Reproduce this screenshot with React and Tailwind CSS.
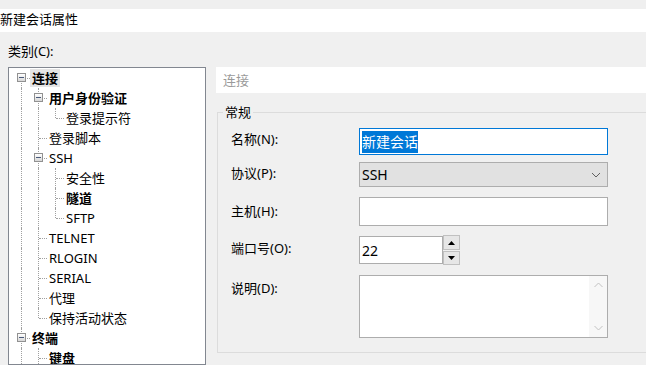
import React from 'react';

const FONT = { fontFamily: '"Noto Sans", "Noto Sans CJK SC", sans-serif' };

// tree rows: level, label, bold, expander, selected, guides (ancestor columns that still continue), last (no sibling below)
const rows = [
    {lv: 0, t: '连接', b: true, exp: true, sel: true, g: [], last: false},
    {lv: 1, t: '用户身份验证', b: true, exp: true, g: [true], last: false},
    {lv: 2, t: '登录提示符', g: [true, true], last: true},
    {lv: 1, t: '登录脚本', g: [true], last: false},
    {lv: 1, t: 'SSH', exp: true, g: [true], last: false},
    {lv: 2, t: '安全性', g: [true, true], last: false},
    {lv: 2, t: '隧道', b: true, g: [true, true], last: false},
    {lv: 2, t: 'SFTP', g: [true, true], last: true},
    {lv: 1, t: 'TELNET', g: [true], last: false},
    {lv: 1, t: 'RLOGIN', g: [true], last: false},
    {lv: 1, t: 'SERIAL', g: [true], last: false},
    {lv: 1, t: '代理', g: [true], last: false},
    {lv: 1, t: '保持活动状态', g: [true], last: true},
    {lv: 0, t: '终端', b: true, exp: true, g: [], last: false},
    {lv: 1, t: '键盘', b: true, g: [true], last: false},
];

function Expander ()
{
    return (
        <div className="absolute left-[4px] top-[5px] w-[9px] h-[9px] border border-[#919191] bg-gradient-to-b from-white to-[#d8d8d8] flex items-center justify-center z-10">
            <div className="w-[5px] h-px bg-[#4a5a7a]" />
        </div>
    );
}

function TreeRow ({row, first})
{
    return (
        <div className="flex h-[20px] items-stretch">
            {row.g.map((on, i) => (
                <div key={i} className="w-[17px] relative shrink-0">
                    {on && <div className="absolute left-[8px] top-0 bottom-0 border-l border-dotted border-[#a0a0a0]" />}
                </div>
            ))}
            <div className="w-[17px] relative shrink-0">
                <div className={`absolute left-[8px] border-l border-dotted border-[#a0a0a0] ${first ? 'top-[10px]' : 'top-0'} ${row.last ? 'h-[10px]' : 'bottom-0'}`} />
                <div className="absolute left-[9px] right-0 top-[10px] border-t border-dotted border-[#a0a0a0]" />
                {row.exp && <Expander />}
            </div>
            <div className={`px-[2px] leading-[18px] my-[1px] text-[13px] text-black whitespace-nowrap ${row.b ? 'font-bold' : ''} ${row.sel ? 'bg-[#e5e5e5]' : ''}`}>
                {row.t}
            </div>
        </div>
    );
}

function Field ({label, pad, children, className = ''})
{
    return (
        <div className={`flex items-start ${className}`}>
            <div className={`w-[141px] shrink-0 pl-[13px] text-[13px] leading-[18px] text-black ${pad}`}>{label}</div>
            {children}
        </div>
    );
}

export default function App ()
{
    return (
        <div style={FONT} className="w-[646px] h-[365px] overflow-hidden bg-[#f0f0f0] flex flex-col">
            <div className="h-[9px] shrink-0 bg-[#efefef]" />
            <div className="h-[23px] shrink-0 bg-white text-[13px] leading-[21px] text-black whitespace-nowrap">新建会话属性</div>

            <div className="flex flex-1 min-h-0">
                {/* 类别 */}
                <div className="w-[206px] shrink-0 pl-[8px] flex flex-col">
                    <div className="mt-[10px] h-[18px] leading-[18px] text-[13px] text-black">类别(C):</div>
                    <div className="mt-[7px] flex-1 bg-white border border-[#828790] pl-[4px] overflow-hidden">
                        {rows.map((r, i) => <TreeRow key={i} row={r} first={i === 0} />)}
                    </div>
                </div>

                {/* 属性页 */}
                <div className="flex-1 ml-[10px] pt-[35px] flex flex-col min-w-0">
                    <div className="h-[26px] bg-white pl-[7px] text-[13px] leading-[26px] text-[#9a9a9a]">连接</div>

                    <div className="relative mt-[19px] ml-px mr-[-20px] h-[241px] border border-[#dcdcdc] pt-[15px]">
                        <div className="absolute -top-[10px] left-[5px] px-[2px] bg-[#f0f0f0] text-[13px] leading-[18px] text-black">常规</div>

                        <Field label="名称(N):" pad="pt-[2px]">
                            <div className="w-[249px] h-[27px] border border-[#0078d7] bg-white pl-[2px] flex items-center">
                                <span className="bg-[#0078d7] text-white text-[14px] leading-[22px]">新建会话</span>
                            </div>
                        </Field>

                        <Field label="协议(P):" pad="pt-[2px]" className="mt-[7px]">
                            <div className="w-[249px] h-[25px] border border-[#adadad] bg-[#e1e1e1] pl-[2px] pr-[6px] flex items-center justify-between">
                                <span className="text-[14px] text-black">SSH</span>
                                <svg width="10" height="6" viewBox="0 0 10 6"><path d="M1 1l4 4 4-4" fill="none" stroke="#606060" strokeWidth="1" /></svg>
                            </div>
                        </Field>

                        <Field label="主机(H):" pad="pt-[5px]" className="mt-[10px]">
                            <div className="w-[249px] h-[29px] border border-[#adadad] bg-white" />
                        </Field>

                        <Field label="端口号(O):" pad="pt-[3px]" className="mt-[10px]">
                            <div className="flex">
                                <div className="w-[84px] h-[28px] border border-[#adadad] bg-white pl-[2px] flex items-center text-[14px] text-black">22</div>
                                <div className="flex flex-col gap-px -mt-px">
                                    <div className="w-[17px] h-[15px] border border-[#c0c0c0] bg-[#e6e6e6] flex items-center justify-center">
                                        <svg width="7" height="4" viewBox="0 0 7 4"><path d="M0 4h7L3.5 0z" fill="#000" /></svg>
                                    </div>
                                    <div className="w-[17px] h-[14px] border border-[#c0c0c0] bg-[#e6e6e6] flex items-center justify-center">
                                        <svg width="7" height="4" viewBox="0 0 7 4"><path d="M0 0h7L3.5 4z" fill="#000" /></svg>
                                    </div>
                                </div>
                            </div>
                        </Field>

                        <Field label="说明(D):" pad="pt-[4px]" className="mt-[10px]">
                            <div className="w-[249px] h-[63px] border border-[#adadad] bg-white flex justify-end">
                                <div className="w-[18px] bg-[#f7f7f7] flex flex-col items-center justify-between py-[6px]">
                                    <svg width="9" height="6" viewBox="0 0 9 6"><path d="M0.5 5l4-4 4 4" fill="none" stroke="#c2c2c2" strokeWidth="1" /></svg>
                                    <svg width="9" height="6" viewBox="0 0 9 6"><path d="M0.5 1l4 4 4-4" fill="none" stroke="#c2c2c2" strokeWidth="1" /></svg>
                                </div>
                            </div>
                        </Field>
                    </div>
                </div>
            </div>
        </div>
    );
}
